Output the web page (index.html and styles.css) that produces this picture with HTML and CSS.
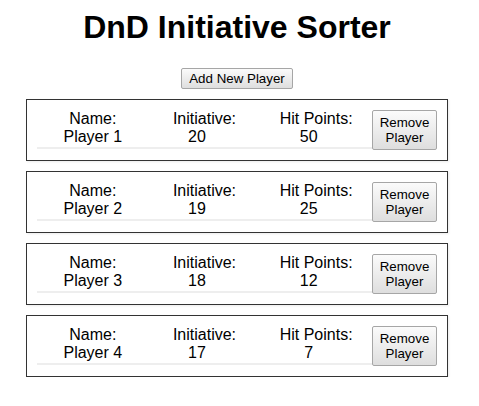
FILE: index.html
```html
<!DOCTYPE html>
<html lang="en">
<head>
<meta charset="utf-8">
<title>DnD Initiative Sorter</title>
<link rel="stylesheet" href="styles.css">
</head>
<body>
<div class="app">
  <h1 class="title">DnD Initiative Sorter</h1>
  <div class="toolbar">
    <button class="btn add-btn" type="button">Add New Player</button>
  </div>
  <div class="players">
    <div class="player-card">
      <div class="fields">
        <div class="field"><div class="label">Name:</div><div class="value">Player 1</div></div>
        <div class="field"><div class="label">Initiative:</div><div class="value num">20</div></div>
        <div class="field"><div class="label">Hit Points:</div><div class="value num">50</div></div>
      </div>
      <button class="btn remove-btn" type="button">Remove Player</button>
    </div>
    <div class="player-card">
      <div class="fields">
        <div class="field"><div class="label">Name:</div><div class="value">Player 2</div></div>
        <div class="field"><div class="label">Initiative:</div><div class="value num">19</div></div>
        <div class="field"><div class="label">Hit Points:</div><div class="value num">25</div></div>
      </div>
      <button class="btn remove-btn" type="button">Remove Player</button>
    </div>
    <div class="player-card">
      <div class="fields">
        <div class="field"><div class="label">Name:</div><div class="value">Player 3</div></div>
        <div class="field"><div class="label">Initiative:</div><div class="value num">18</div></div>
        <div class="field"><div class="label">Hit Points:</div><div class="value num">12</div></div>
      </div>
      <button class="btn remove-btn" type="button">Remove Player</button>
    </div>
    <div class="player-card">
      <div class="fields">
        <div class="field"><div class="label">Name:</div><div class="value">Player 4</div></div>
        <div class="field"><div class="label">Initiative:</div><div class="value num">17</div></div>
        <div class="field"><div class="label">Hit Points:</div><div class="value num">7</div></div>
      </div>
      <button class="btn remove-btn" type="button">Remove Player</button>
    </div>
  </div>
</div>
</body>
</html>
```

FILE: styles.css
```css
html, body {
  background: #fff;
}
body {
  margin: 8px 13px 8px 8px;
  font-family: "Liberation Sans", Arial, sans-serif;
  color: #000;
}
.app {
  display: flex;
  flex-direction: column;
  align-items: center;
}
.title {
  margin: 1px 0 22px;
  font-size: 32px;
  font-weight: bold;
  line-height: 37px;
  text-align: center;
}
.toolbar {
  display: flex;
  justify-content: center;
  margin-bottom: 10px;
}
.btn {
  font-family: "Liberation Sans", Arial, sans-serif;
  font-size: 13.33px;
  color: #000;
  background: linear-gradient(#fbfbfb, #dedede);
  border: 1px solid #a6a6a6;
  border-radius: 2px;
  cursor: pointer;
}
.add-btn {
  height: 21px;
  padding: 0 7px;
  line-height: 17px;
}
.players {
  display: flex;
  flex-direction: column;
  gap: 10px;
  width: 422px;
}
.player-card {
  display: flex;
  align-items: flex-start;
  border: 1px solid #333;
  padding: 10px;
  box-shadow: 1px 1px 2px rgba(0, 0, 0, 0.08);
}
.fields {
  flex: 1;
  display: grid;
  grid-template-columns: 1fr 1fr 1fr;
  border-bottom: 2px solid #eeeeee;
}
.field {
  text-align: center;
  font-size: 16px;
  line-height: 18.4px;
}
.value.num {
  padding-right: 15px;
}
.remove-btn {
  flex: none;
  width: 65px;
  height: 40px;
  padding: 0 4px;
  line-height: 15px;
}
```
